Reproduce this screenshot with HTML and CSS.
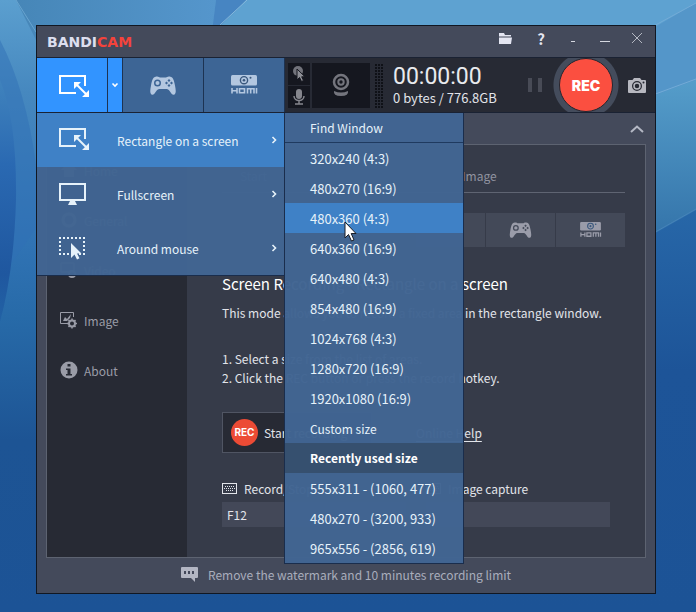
FILE: index.html
```html
<!DOCTYPE html>
<html lang="en">
<head>
  <meta charset="UTF-8">
  <meta name="viewport" content="width=device-width, initial-scale=1.0">
  <title>Bandicam</title>
  <link rel="stylesheet" href="styles.css">
</head>
<body>

  <!-- Desktop wallpaper -->
  <svg class="wallpaper" viewBox="0 0 696 612" preserveAspectRatio="none" aria-hidden="true">
    <defs>
      <linearGradient id="base" x1="0" y1="0" x2="0" y2="1">
        <stop offset="0" stop-color="#5b9fcf"/>
        <stop offset="0.15" stop-color="#4688bf"/>
        <stop offset="0.4" stop-color="#3073b4"/>
        <stop offset="0.52" stop-color="#276aa8"/>
        <stop offset="0.72" stop-color="#1d5494"/>
        <stop offset="1" stop-color="#1c5396"/>
      </linearGradient>
      <linearGradient id="leftWing" x1="0" y1="0" x2="0" y2="1">
        <stop offset="0" stop-color="#4083bd"/>
        <stop offset="0.35" stop-color="#2a69b2"/>
        <stop offset="0.8" stop-color="#1f579f"/>
        <stop offset="1" stop-color="#2262a5"/>
      </linearGradient>
      <linearGradient id="rightBand" x1="0" y1="0" x2="0" y2="1">
        <stop offset="0" stop-color="#559dca"/>
        <stop offset="1" stop-color="#3474aa"/>
      </linearGradient>
      <linearGradient id="rightDeep" x1="0" y1="0" x2="0" y2="1">
        <stop offset="0" stop-color="#2767a8"/>
        <stop offset="0.4" stop-color="#1d5498"/>
        <stop offset="1" stop-color="#1c5396"/>
      </linearGradient>
      <linearGradient id="topLeft" x1="0" y1="0" x2="1" y2="0">
        <stop offset="0" stop-color="#4585b6"/>
        <stop offset="1" stop-color="#5596cc"/>
      </linearGradient>
    </defs>
    <rect width="696" height="612" fill="url(#base)"/>
    <path d="M0 0H216L211 40H36L16 0Z" fill="url(#topLeft)"/>
    <path d="M0 40Q26 90 36 165V228L0 280Z" fill="#2f70b6" opacity=".5"/>
    <path d="M0 80Q17 120 16 200Q14 270 0 322Z" fill="url(#leftWing)"/>
    <path d="M216 0H246L211 40Z" fill="#4785c2"/>
    <path d="M247 0H696V60L650 90L216 30Z" fill="#5ea2d1"/>
    <path d="M247 0L219 26" stroke="#86b9dc"/>
    <path d="M16 0L36 32" stroke="#68a4cf"/>
    <path d="M650 30L696 3V82L650 97Z" fill="#5496c9"/>
    <path d="M650 97L696 80V210L650 236Z" fill="url(#rightBand)"/>
    <path d="M650 236L696 210V612H650Z" fill="url(#rightDeep)"/>
    <path d="M650 96L696 79M650 28L696 3" stroke="#73abd6"/>
    <path d="M650 235L696 209" stroke="#4683b8"/>
  </svg>

  <!-- Icons used more than once -->
  <svg class="sprite" aria-hidden="true">
    <symbol id="i-rect" viewBox="0 0 31 24">
      <path d="M17 18H1V1H26V11" fill="none" stroke="currentColor" stroke-width="2"/>
      <path d="M17 9L28 20" fill="none" stroke="currentColor" stroke-width="2"/>
      <path d="M15 7H22L15 14ZM30 22H23L30 15Z" fill="currentColor"/>
    </symbol>
    <symbol id="i-pad" viewBox="0 0 26 19">
      <path fill="currentColor" fill-rule="evenodd" d="M5 1C8-.3 9 1.300 10 1.500h6C17 1.300 18-.3 21 1c2 .7 3 3 4 8.500.8 4 1.500 8.500-1 9.200-3 .6-4-5.200-7-5.700H9c-3 .5-4 6.300-7 5.700-2.500-.7-1.800-5.200-1-9.200C2 4 3 1.700 5 1zM7.500 3.500a3.500 3.500 0 1 0 0 7 3.500 3.500 0 0 0 0-7zM19 3l-1.500 1.500L19 6l1.500-1.500zM16.500 5.500L15 7l1.500 1.500L18 7zM21.500 5.500L20 7l1.500 1.500L23 7zM19 8l-1.500 1.500L19 11l1.500-1.500z"/>
      <circle cx="7.500" cy="7" r="2" fill="currentColor"/>
    </symbol>
    <symbol id="i-hdmi" viewBox="0 0 28 20">
      <rect x="1" y="0" width="26" height="10.500" rx="1.500" fill="currentColor"/>
      <circle cx="14" cy="5.200" r="3.600" fill="none" stroke="#39577c" stroke-width="1.400"/>
      <circle cx="14" cy="5.200" r="1.300" fill="#39577c"/>
      <circle cx="20.500" cy="2.800" r="1" fill="#39577c"/>
      <path d="M2 13v5.500M2 15.700h5M7 13v5.500M9.500 13.700h5v4.100h-5zM17.500 18.500v-4.800h6.500v4.800M20.700 13.700v4.800M26.500 13v5.500" fill="none" stroke="currentColor" stroke-width="1.600"/>
    </symbol>
    <symbol id="i-keys" viewBox="0 0 15 11">
      <rect x=".5" y=".5" width="14" height="10" fill="none" stroke="currentColor"/>
      <path d="M3 3.500h10M2 5.500h11M4 7.500h7" stroke="currentColor" stroke-width="1" stroke-dasharray="1 1"/>
    </symbol>
    <symbol id="i-next" viewBox="0 0 6 8">
      <path d="M1.500 1L4.500 4L1.500 7" fill="none" stroke="currentColor" stroke-width="1.600"/>
    </symbol>
  </svg>

  <div class="window">
    <header class="titlebar">
      <h1 class="logo">BANDI<span>CAM</span></h1>
      <button class="title-btn" aria-label="Open folder">
        <svg width="13" height="11" viewBox="0 0 13 11"><path d="M0 0H5L6 2H12V3.500H0ZM0 4.500H13L12 11H0Z" fill="#e4e6f2"/></svg>
      </button>
      <button class="title-btn help-btn">?</button>
      <button class="title-btn" aria-label="To tray">
        <svg width="12" height="12" viewBox="0 0 12 12"><path d="M4 9.500H8" stroke="#d5d8e0"/></svg>
      </button>
      <button class="title-btn" aria-label="Minimize">
        <svg width="12" height="12" viewBox="0 0 12 12"><path d="M1 9.500H11" stroke="#d5d8e0"/></svg>
      </button>
      <button class="title-btn" aria-label="Close">
        <svg width="12" height="12" viewBox="0 0 12 12"><path d="M1 1L11 11M11 1L1 11" stroke="#b4b8c2"/></svg>
      </button>
    </header>

    <div class="toolbar">
      <button class="mode mode-active" aria-label="Screen recording mode"><svg width="31" height="24"><use href="#i-rect"/></svg></button>
      <button class="mode-drop" aria-label="Choose area">
        <svg width="8" height="6" viewBox="0 0 8 6"><path d="M1.500 1.500L4 4L6.500 1.500" fill="none" stroke="currentColor" stroke-width="1.600"/></svg>
      </button>
      <button class="mode" aria-label="Game recording mode"><svg width="26" height="19"><use href="#i-pad"/></svg></button>
      <button class="mode" aria-label="Device recording mode"><svg width="28" height="20"><use href="#i-hdmi"/></svg></button>

      <div class="status">
        <div class="toggles">
          <button class="toggle" aria-label="Mouse effects">
            <svg width="14" height="16" viewBox="0 0 14 16"><circle cx="6" cy="5" r="5" fill="#72737b"/><path d="M5 3V14L7.500 11.500L9.500 15.500L11.500 14.500L9.700 10.800H13Z" fill="#8d8e95" stroke="#15171f"/></svg>
          </button>
          <button class="toggle" aria-label="Microphone">
            <svg width="12" height="16" viewBox="0 0 12 16"><rect x="3" y="0" width="6" height="10" rx="3" fill="#85868d"/><path d="M1 7c0 6 10 6 10 0M6 11v4M2 15h8" fill="none" stroke="#85868d" stroke-width="1.500"/></svg>
          </button>
        </div>
        <button class="webcam" aria-label="Webcam">
          <svg width="18" height="24" viewBox="0 0 18 24"><circle cx="9" cy="9" r="7" fill="none" stroke="#74757d" stroke-width="2.500"/><circle cx="9" cy="9" r="2.700" fill="none" stroke="#74757d" stroke-width="2"/><path d="M2 18Q9 21 16 18Q17 23 9 23Q1 23 2 18Z" fill="#74757d"/></svg>
        </button>
        <div class="meter"></div>
        <div class="clock">
          <div class="time">00:00:00</div>
          <div class="bytes">0 bytes / 776.8GB</div>
        </div>
        <button class="pause" aria-label="Pause"></button>
        <div class="rec-ring"><button class="rec">REC</button></div>
        <button class="camera" aria-label="Capture image">
          <svg width="18" height="15" viewBox="0 0 18 15"><path fill="#b7b8c0" fill-rule="evenodd" d="M1 2H4.500L6 0H12L13.500 2H17Q18 2 18 3V14Q18 15 17 15H1Q0 15 0 14V3Q0 2 1 2ZM9 3A5 5 0 1 0 9 13A5 5 0 0 0 9 3Z"/><circle cx="9" cy="8" r="3" fill="none" stroke="#b7b8c0" stroke-width="1.500"/><circle cx="15.500" cy="4.500" r="1" fill="#262933"/></svg>
        </button>
      </div>
    </div>

    <div class="body">
      <div class="fold">
        <button aria-label="Collapse">
          <svg width="14" height="8" viewBox="0 0 14 8"><path d="M1 7L7 1.500L13 7" fill="none" stroke="#b4b8c4" stroke-width="2"/></svg>
        </button>
      </div>

      <div class="panel">
        <nav class="sidebar">
          <a href="#">
            <svg width="18" height="18" viewBox="0 0 18 18"><path d="M9 1L17 9H14V16H4V9H1Z" fill="currentColor"/></svg>Home</a>
          <a href="#">
            <svg width="18" height="18" viewBox="0 0 18 18"><circle cx="9" cy="9" r="6" fill="none" stroke="currentColor" stroke-width="3"/></svg>General</a>
          <a href="#">
            <svg width="18" height="18" viewBox="0 0 18 18"><path d="M1 2H14V11H1Z" fill="none" stroke="currentColor"/><circle cx="12" cy="13" r="3" fill="none" stroke="currentColor" stroke-width="2"/></svg>Video</a>
          <a href="#">
            <svg width="18" height="18" viewBox="0 0 18 18"><path d="M7 12.500H.5V1.500H13.500V6" fill="none" stroke="currentColor"/><path d="M3 10L5 6L7 8L11 3L10 7L7 10Z" fill="currentColor"/><circle cx="12" cy="12.500" r="3" fill="none" stroke="currentColor" stroke-width="2"/><path d="M12 7.500V10M12 15V17.500M7 12.500H9.500M14.500 12.500H17M8.500 9L10 10.500M14 14.500L15.500 16M15.500 9L14 10.500M10 14.500L8.500 16" stroke="currentColor" stroke-width="1.500"/></svg>Image</a>
          <a href="#">
            <svg width="18" height="18" viewBox="0 0 18 18"><circle cx="9" cy="9" r="8.500" fill="currentColor"/><path d="M7.500 3H10.500V5.500H7.500ZM6 7.500H10.500V13H12V14.500H6V13H7.500V9H6Z" fill="#272a34"/></svg>About</a>
        </nav>

        <main class="content">
          <div class="tabs">
            <a href="#">Start</a>
            <a href="#">Image</a>
          </div>

          <div class="mode-row">
            <button aria-label="Around mouse"></button>
            <button aria-label="Game"><svg width="23" height="16"><use href="#i-pad"/></svg></button>
            <button aria-label="HDMI"><svg width="23" height="16"><use href="#i-hdmi"/></svg></button>
          </div>

          <h2>Screen Recording - Rectangle on a screen</h2>
          <p>This mode allows you to record a fixed area in the rectangle window.</p>
          <ol>
            <li>Select a size from the list of areas.</li>
            <li>Click the REC button or press the record hotkey.</li>
          </ol>

          <div class="start-row">
            <button class="start"><span class="start-dot">REC</span>Start recording</button>
            <a href="#">Online Help</a>
          </div>

          <div class="hotkeys">
            <div class="hotkey">
              <label for="recKey"><svg width="15" height="11"><use href="#i-keys"/></svg>Record/Stop</label>
              <input type="text" id="recKey" value="F12">
            </div>
            <div class="hotkey">
              <label for="capKey"><svg width="15" height="11"><use href="#i-keys"/></svg>Image capture</label>
              <input type="text" id="capKey">
            </div>
          </div>
        </main>
      </div>

      <!-- Area menu -->
      <div class="menu">
        <button class="menu-item selected">
          <svg width="31" height="24"><use href="#i-rect"/></svg>
          <span>Rectangle on a screen</span>
          <svg width="6" height="8"><use href="#i-next"/></svg>
        </button>
        <button class="menu-item">
          <svg width="31" height="24" viewBox="0 0 31 24"><path d="M1 2H26V18H1Z" fill="none" stroke="currentColor" stroke-width="2"/><path d="M11 19H16L18 23H9Z" fill="currentColor"/></svg>
          <span>Fullscreen</span>
          <svg width="6" height="8"><use href="#i-next"/></svg>
        </button>
        <button class="menu-item">
          <svg width="31" height="24" viewBox="0 0 31 24"><path d="M0 2H26M1 5V20M25 5V16M0 18H10M20 18H26" fill="none" stroke="currentColor" stroke-width="2" stroke-dasharray="2 2"/><path d="M12 7V22L15.500 18.500L18 23.500L20.500 22.300L18 17.500H22.500Z" fill="currentColor"/></svg>
          <span>Around mouse</span>
          <svg width="6" height="8"><use href="#i-next"/></svg>
        </button>

        <div class="submenu">
          <button class="find">Find Window</button>
          <button>320x240 (4:3)</button>
          <button>480x270 (16:9)</button>
          <button class="selected">480x360 (4:3)
            <svg class="cursor" width="13" height="21" viewBox="0 0 13 21"><path d="M1 1V17L4.500 13.500L7.500 20L10 19L7.200 12.500H12Z" fill="#fff" stroke="#1a1d26"/></svg>
          </button>
          <button>640x360 (16:9)</button>
          <button>640x480 (4:3)</button>
          <button>854x480 (16:9)</button>
          <button>1024x768 (4:3)</button>
          <button>1280x720 (16:9)</button>
          <button>1920x1080 (16:9)</button>
          <button class="custom">Custom size</button>
          <h3>Recently used size</h3>
          <button>555x311 - (1060, 477)</button>
          <button>480x270 - (3200, 933)</button>
          <button>965x556 - (2856, 619)</button>
        </div>
      </div>
    </div>

    <footer class="footer">
      <svg width="17" height="15" viewBox="0 0 17 15"><path d="M1 0H16Q17 0 17 1V10Q17 11 16 11H14V15L10 11H1Q0 11 0 10V1Q0 0 1 0Z" fill="#b3b6c3"/><path d="M3 4H5V7H3ZM7 4H9V7H7ZM11 4H13V7H11Z" fill="#43485a"/></svg>
      <a href="#">Remove the watermark and 10 minutes recording limit</a>
    </footer>
  </div>

</body>
</html>
```
FILE: styles.css
```css
* {
  box-sizing: border-box;
}

body {
  margin: 0;
  padding: 25px 40px 17px 36px;
  min-height: 100vh;
  background-color: #1c5396;
  font-family: "Noto Sans CJK KR", "Noto Sans", sans-serif;
  font-size: 12px;
  line-height: 19px;
  color: #e2e4ea;
}

button,
input {
  font: inherit;
  color: inherit;
  border: none;
  background: none;
  padding: 0;
}

button {
  cursor: pointer;
}

a {
  color: inherit;
  text-decoration: none;
}

svg {
  display: block;
  flex: none;
}

.wallpaper {
  position: absolute;
  top: 0;
  left: 0;
  width: 100%;
  height: 100%;
  z-index: -1;
}

.sprite {
  position: absolute;
  width: 0;
  height: 0;
}

.window {
  border: 1px solid #111722;
  background-color: #444a5b;
}

/* Title bar */
.titlebar {
  display: flex;
  align-items: center;
  height: 31px;
  padding: 0 6px 7px 10px;
}

.logo {
  margin: 0 auto 0 0;
  padding-top: 8px;
  font-family: "DejaVu Sans", sans-serif;
  font-size: 14px;
  font-weight: bold;
  color: #dcdeee;
}

.logo span {
  color: #f4433b;
}

.title-btn {
  display: flex;
  align-items: center;
  justify-content: center;
  width: 24px;
  height: 24px;
  margin-right: 8px;
}

.title-btn:first-of-type {
  margin-right: 12px;
}

.title-btn:last-child {
  margin-right: 0;
}

.help-btn {
  font-size: 15px;
  font-weight: bold;
  color: #e4e6f2;
}

/* Toolbar */
.toolbar {
  display: flex;
  height: 56px;
  border-top: 1px solid #1a2233;
  border-bottom: 1px solid #1a2233;
  background-color: #272a34;
}

.mode,
.mode-drop {
  display: flex;
  align-items: center;
  justify-content: center;
  width: 81px;
  border-right: 1px solid #1d3352;
  background-color: #3d6595;
  color: #b3c7e0;
}

.mode-active,
.mode-drop {
  width: 71px;
  background-color: #3294ff;
  color: #fff;
}

.mode-active {
  padding: 3px 0 0 4px;
}

.mode-drop {
  width: 15px;
}

.status {
  flex: 1;
  display: flex;
  align-items: center;
  padding-left: 3px;
}

.toggles {
  display: flex;
  flex-direction: column;
  gap: 1px;
}

.toggle,
.webcam {
  display: flex;
  align-items: center;
  justify-content: center;
  width: 22px;
  height: 22px;
  background-color: #15171f;
}

.webcam {
  width: 58px;
  height: 45px;
  margin-left: 2px;
}

.meter {
  width: 9px;
  height: 45px;
  margin-left: 4px;
  background-color: #0f1117;
  background-image: linear-gradient(#272a34 1px, transparent 1px), linear-gradient(90deg, #272a34 1px, transparent 1px);
  background-size: 3px 3px;
}

.clock {
  flex: 1;
  margin-left: 10px;
  padding-top: 2px;
  white-space: nowrap;
}

.time {
  font-family: Roboto, sans-serif;
  font-size: 23px;
  line-height: 22px;
  color: #e9eaee;
}

.bytes {
  font-size: 13px;
}

.pause {
  width: 14px;
  height: 14px;
  border: solid #484b56;
  border-width: 0 4px;
}

.rec-ring {
  display: flex;
  align-items: center;
  justify-content: center;
  width: 66px;
  height: 54px;
  margin: 0 9px 0 11px;
  background: radial-gradient(circle, #444c5c 32px, transparent 33px);
}

.rec {
  width: 54px;
  height: 54px;
  border: 1px solid #23262f;
  border-radius: 50%;
  background-color: #fb4f40;
  font-family: Inter, sans-serif;
  font-size: 14px;
  font-weight: 900;
  color: #fff;
}

.camera {
  margin-right: 9px;
}

/* Body */
.body {
  position: relative;
}

.fold {
  display: flex;
  justify-content: flex-end;
  height: 31px;
  padding-right: 11px;
}

.panel {
  display: flex;
  margin: 0 9px;
  border: 1px solid #5d6371;
  background-color: #363b49;
}

.sidebar {
  width: 140px;
  padding: 0 13px;
  background-color: #272a34;
}

.sidebar a {
  display: flex;
  align-items: center;
  gap: 6px;
  height: 50px;
  font-size: 12px;
  color: #9a9ca7;
}

.content {
  flex: 1;
  min-width: 0;
  padding: 13px 20px 30px 35px;
}

.tabs {
  display: flex;
  gap: 195px;
  height: 35px;
  padding-left: 18px;
  line-height: 36px;
  border-bottom: 1px solid #5f6472;
  color: #9193a0;
}

.mode-row {
  display: flex;
  justify-content: flex-end;
  gap: 1px;
  margin: 20px 0 26px;
}

.mode-row button {
  display: flex;
  align-items: center;
  justify-content: center;
  width: 69px;
  height: 34px;
  background-color: #434958;
  color: #9a9ca9;
}

h2 {
  margin: 0 0 8px;
  font-size: 15px;
  font-weight: normal;
  line-height: 22px;
  color: #fff;
}

p {
  margin: 0 0 27px;
  white-space: nowrap;
}

ol {
  margin: 0 0 25px;
  padding: 0;
  list-style-position: inside;
}

.start-row {
  display: flex;
  align-items: center;
  gap: 44px;
  margin-bottom: 26px;
}

.start {
  display: flex;
  align-items: center;
  gap: 6px;
  width: 150px;
  height: 41px;
  padding: 0 8px;
  border: 1px solid #505563;
  background-color: #272a34;
  white-space: nowrap;
}

.start-dot {
  width: 27px;
  height: 27px;
  border-radius: 50%;
  background-color: #ec4b35;
  font-family: Inter, sans-serif;
  font-size: 10px;
  font-weight: bold;
  line-height: 27px;
  color: #fff;
}

.start-row a {
  text-decoration: underline;
  text-underline-offset: 3px;
}

.hotkeys {
  display: flex;
  margin-right: 15px;
  gap: 20px;
}

.hotkey {
  flex: 1;
  min-width: 0;
}

.hotkey label {
  display: flex;
  align-items: center;
  gap: 7px;
  margin-bottom: 4px;
}

.hotkey input {
  width: 100%;
  height: 25px;
  padding: 0 5px;
  background-color: #434858;
}

/* Area menu */
.menu {
  position: absolute;
  top: 0;
  left: 0;
  width: 247px;
  border-bottom: 1px solid #1a2d4c;
  background-color: rgba(65, 101, 146, 0.98);
  color: #e6f2fa;
}

.menu-item {
  display: flex;
  align-items: center;
  gap: 27px;
  width: 100%;
  height: 54px;
  padding: 0 7px 0 22px;
  text-align: left;
}

.menu-item span {
  flex: 1;
  white-space: nowrap;
}

.selected {
  background-color: #3f81c6;
}

.submenu {
  position: absolute;
  top: 0;
  left: 100%;
  width: 180px;
  border: 1px solid #1a2d4c;
  border-top: none;
  background-color: rgba(65, 101, 146, 0.98);
}

.submenu button,
.submenu h3 {
  display: block;
  position: relative;
  width: 100%;
  height: 30px;
  margin: 0;
  padding: 0 25px;
  font-size: 13px;
  line-height: 29px;
  text-align: left;
}

.submenu .find,
.submenu .custom,
.submenu h3 {
  font-size: 12px;
}

.submenu .find {
  border-bottom: 1px solid #1f3a5f;
}

.submenu h3 {
  background-color: #36506f;
  color: #fff;
}

.cursor {
  position: absolute;
  top: 18px;
  left: 59px;
  z-index: 1;
}

/* Footer */
.footer {
  display: flex;
  align-items: center;
  justify-content: center;
  gap: 10px;
  height: 35px;
  padding-bottom: 2px;
  color: #a9adbb;
}
```
